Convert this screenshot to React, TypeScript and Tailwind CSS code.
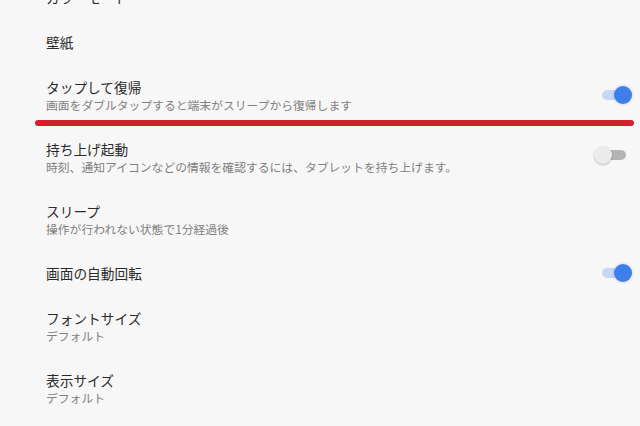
import React from 'react'

type Row = {
  title: string
  sub?: string
  toggle?: 'on' | 'off'
  marked?: boolean
}

const rows: Row[] = [
  { title: 'カラーモード' },
  { title: '壁紙' },
  { title: 'タップして復帰', sub: '画面をダブルタップすると端末がスリープから復帰します', toggle: 'on', marked: true },
  { title: '持ち上げ起動', sub: '時刻、通知アイコンなどの情報を確認するには、タブレットを持ち上げます。', toggle: 'off' },
  { title: 'スリープ', sub: '操作が行われない状態で1分経過後' },
  { title: '画面の自動回転', toggle: 'on' },
  { title: 'フォントサイズ', sub: 'デフォルト' },
  { title: '表示サイズ', sub: 'デフォルト' },
]

const Toggle = ({ on }: { on: boolean }) => (
  <div className={on ? 'relative w-[30px] h-[18px] mr-[10px]' : 'relative w-[30px] h-[18px] mr-[10px] mb-[5px]'}>
    {/* track */}
    <div
      className={
        on
          ? 'absolute left-[2px] top-[4px] w-[22px] h-[10px] rounded-full bg-[#c8d7f3]'
          : 'absolute left-[4px] top-[4px] w-[22px] h-[10px] rounded-full bg-[#b4b4b4]'
      }
    />
    {/* thumb */}
    <div
      className={
        on
          ? 'absolute right-[-2px] top-0 w-[18px] h-[18px] rounded-full bg-[#3f7fe9] shadow-[0_0_3px_rgba(60,110,220,0.35)]'
          : 'absolute left-[-6px] top-0 w-[18px] h-[18px] rounded-full bg-[#ececec] shadow-[0_1px_2px_rgba(0,0,0,0.25)]'
      }
    />
  </div>
)

export default function App() {
  return (
    <div
      className="w-[640px] h-[426px] overflow-hidden bg-[#f7f7f7]"
      style={{ fontFamily: '"Noto Sans CJK JP", "Noto Sans", sans-serif' }}
    >
      <div className="-mt-[26px] flex flex-col">
        {rows.map((row, i) => (
          <div
            key={i}
            className={
              row.sub
                ? 'relative h-[62px] flex items-center pl-[46px]'
                : 'relative h-[45px] flex items-center pl-[46px]'
            }
          >
            <div className="flex-1 flex flex-col">
              <span className="text-[13.7px] leading-[18px] text-[#2b2b2b]">{row.title}</span>
              {row.sub && (
                <span className="text-[11.8px] leading-[17px] text-[#808080]">{row.sub}</span>
              )}
            </div>
            {row.toggle && <Toggle on={row.toggle === 'on'} />}
            {row.marked && (
              <div className="absolute left-[35px] right-[6px] bottom-0 h-[6px] rounded-full bg-[#d3202b]" />
            )}
          </div>
        ))}
      </div>
    </div>
  )
}
